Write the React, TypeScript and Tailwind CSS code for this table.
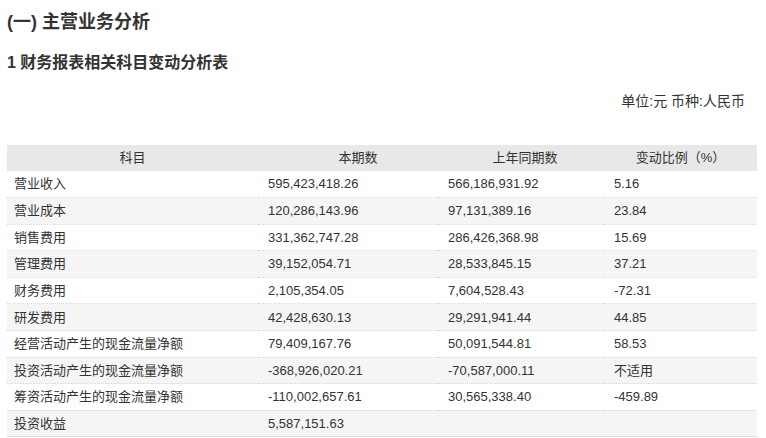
import React from 'react';

type Row = { name: string; cur: string; prev: string; ratio: string };

const ROWS: Row[] = [
  { name: '营业收入', cur: '595,423,418.26', prev: '566,186,931.92', ratio: '5.16' },
  { name: '营业成本', cur: '120,286,143.96', prev: '97,131,389.16', ratio: '23.84' },
  { name: '销售费用', cur: '331,362,747.28', prev: '286,426,368.98', ratio: '15.69' },
  { name: '管理费用', cur: '39,152,054.71', prev: '28,533,845.15', ratio: '37.21' },
  { name: '财务费用', cur: '2,105,354.05', prev: '7,604,528.43', ratio: '-72.31' },
  { name: '研发费用', cur: '42,428,630.13', prev: '29,291,941.44', ratio: '44.85' },
  { name: '经营活动产生的现金流量净额', cur: '79,409,167.76', prev: '50,091,544.81', ratio: '58.53' },
  { name: '投资活动产生的现金流量净额', cur: '-368,926,020.21', prev: '-70,587,000.11', ratio: '不适用' },
  { name: '筹资活动产生的现金流量净额', cur: '-110,002,657.61', prev: '30,565,338.40', ratio: '-459.89' },
  { name: '投资收益', cur: '5,587,151.63', prev: '', ratio: '' },
];

const App: React.FC = () => {
  return (
    <div className="w-[766px] h-[438px] bg-white text-[#333] overflow-hidden font-['Liberation_Sans','Noto_Sans_CJK_SC',sans-serif]">
      <div className="px-[7px] pt-[9px]">
        <h1 className="text-[18px] font-bold leading-[26px]">(一) 主营业务分析</h1>
        <h2 className="text-[16px] font-bold leading-[22px] mt-[17px]">1 财务报表相关科目变动分析表</h2>
        <div className="text-right text-[14px] leading-[20px] mt-[17px] pr-[14px]">单位:元 币种:人民币</div>

        <table className="mt-[34px] w-[750px] border-collapse text-[13px] table-fixed">
          <colgroup>
            <col className="w-[251px]" />
            <col className="w-[180px]" />
            <col className="w-[166px]" />
            <col className="w-[153px]" />
          </colgroup>
          <thead>
            <tr className="bg-[#e8e8e8] h-[26px]">
              <th className="font-normal text-center">科目</th>
              <th className="font-normal text-center pl-[20px]">本期数</th>
              <th className="font-normal text-center pl-[8px]">上年同期数</th>
              <th className="font-normal text-center">变动比例（%）</th>
            </tr>
          </thead>
          <tbody>
            {ROWS.map((r, i) => (
              <tr
                key={r.name}
                className={`h-[26.6px] ${i % 2 === 1 ? 'bg-[#f5f5f5]' : 'bg-white'} ${
                  i === ROWS.length - 1 ? 'border-b border-solid border-[#dcdcdc]' : 'border-b border-dotted border-[#d8d8d8]'
                }`}
              >
                <td className="pl-[7px] whitespace-nowrap">{r.name}</td>
                <td className="pl-[10px] whitespace-nowrap">{r.cur}</td>
                <td className="pl-[10px] whitespace-nowrap">{r.prev}</td>
                <td className="pl-[10px] whitespace-nowrap">{r.ratio}</td>
              </tr>
            ))}
          </tbody>
        </table>
      </div>
    </div>
  );
};

export default App;
